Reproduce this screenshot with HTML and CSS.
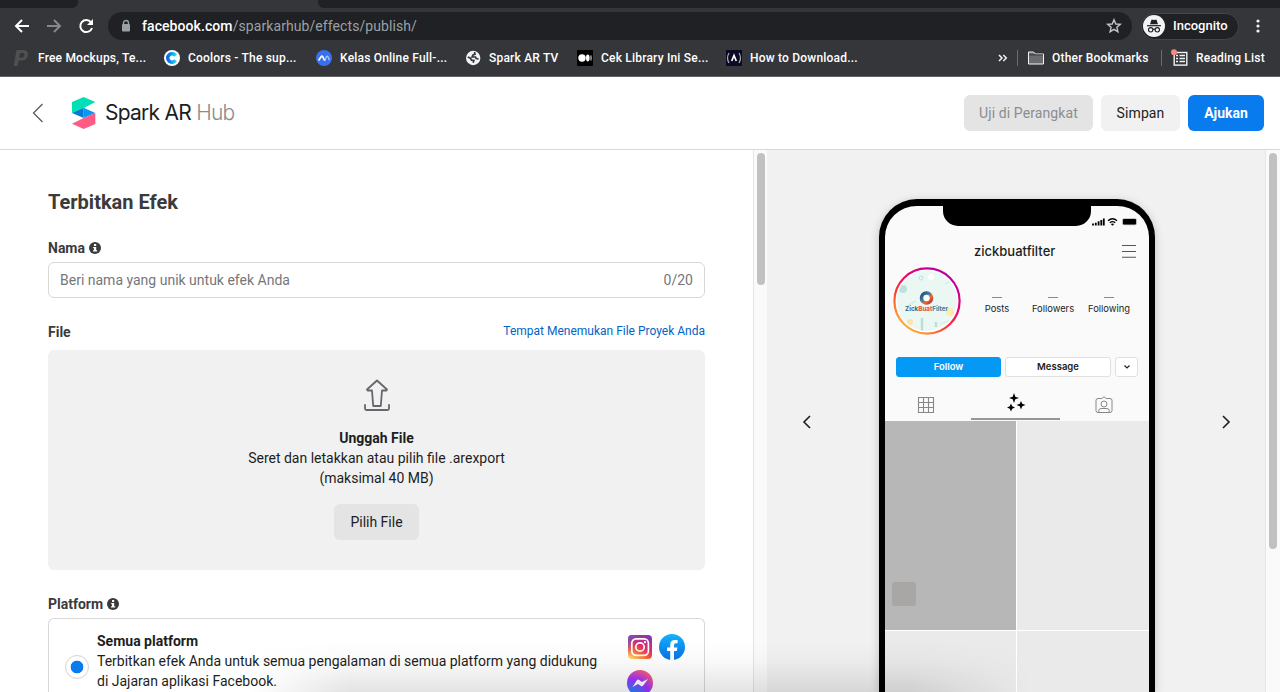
FILE: index.html
```html
<!DOCTYPE html>
<html lang="id">
<head>
<meta charset="utf-8">
<title>Spark AR Hub</title>
<link rel="stylesheet" href="styles.css">
</head>
<body>
<div class="browser">
  <div class="tabs"><div class="tab-left"></div><div class="tab-gap"></div><div class="tab-right"></div></div>
  <div class="toolbar">
    <svg class="nav-icons" width="108" height="28" fill="none" stroke-width="2">
      <path d="M29 14H16M22 8L16 14L22 20" stroke="#fff"/>
      <path d="M47 14H60M54 8L60 14L54 20" stroke="#87888b"/>
      <path d="M91 10.3A6 6 0 1 0 92 16" stroke="#fff"/><path d="M93 7V13H87Z" fill="#fff"/>
    </svg>
    <div class="address">
      <svg width="10" height="14"><path d="M2.5 6V4a2.5 2.5 0 0 1 5 0V6" fill="none" stroke="#9aa0a6" stroke-width="1.4"/><rect x="1" y="5" width="8" height="7.5" rx="1" fill="#9aa0a6"/></svg>
      <div class="url"><span class="host">facebook.com</span>/sparkarhub/effects/publish/</div>
      <svg class="star" width="16" height="16"><path d="M8 1.8L9.8 6L14.3 6.4L10.9 9.3L11.9 13.7L8 11.4L4.1 13.7L5.1 9.3L1.7 6.4L6.2 6Z" fill="none" stroke="#c4c5c7" stroke-width="1.4"/></svg>
    </div>
    <div class="incognito">
      <svg width="22" height="22"><circle cx="11" cy="11" r="11" fill="#f1f3f4"/><path d="M7 9.2L8.4 5Q8.7 4.3 9.5 4.7L11 5L12.5 4.7Q13.3 4.3 13.6 5L15 9.2Z" fill="#202124"/><path d="M4 10.7H18" stroke="#202124" stroke-width="1.2"/><g fill="none" stroke="#202124" stroke-width="1.1"><circle cx="7.7" cy="14.8" r="2.2"/><circle cx="14.3" cy="14.8" r="2.2"/><path d="M10 14.5Q11 13.8 12 14.5"/></g></svg>
      <span>Incognito</span>
    </div>
    <svg class="kebab" width="6" height="16" fill="#f1f3f4"><circle cx="3" cy="3" r="1.6"/><circle cx="3" cy="8" r="1.6"/><circle cx="3" cy="13" r="1.6"/></svg>
  </div>
  <div class="bookmarks">
    <div class="bookmark"><svg width="16" height="16"><path d="M3.5 0H10.5Q15.5 .3 15 5Q14 10.5 8.8 10.5H5.8L4.4 16H.7ZM7 3L6.2 7.8H8.5Q11 7.8 11.4 5Q11.6 3 9.5 3Z" fill="#505050" fill-rule="evenodd"/></svg><span>Free Mockups, Te...</span></div>
    <div class="bookmark"><svg width="16" height="16"><defs><linearGradient id="cool"><stop stop-color="#0869e8"/><stop offset="1" stop-color="#14d5ee"/></linearGradient></defs><circle cx="8" cy="8" r="8" fill="#fff"/><path d="M11.5 5.7A4.2 4.2 0 1 0 11.5 10.3" fill="none" stroke="url(#cool)" stroke-width="3.5"/></svg><span>Coolors - The sup...</span></div>
    <div class="bookmark"><svg width="16" height="16"><circle cx="8" cy="8" r="8" fill="#3971ed"/><path d="M2.6 10.5L5.2 6.5Q6 5.5 6.7 6.6L8.1 9.5Q8.7 10.5 9.4 9.3" fill="none" stroke="#fff" stroke-width="1.6"/><path d="M9 9.7L10.6 6.5Q11.4 5.5 12.1 7L13.5 10.3" fill="none" stroke="#a5c0fa" stroke-width="1.4"/></svg><span>Kelas Online Full-...</span></div>
    <div class="bookmark globe"><svg width="16" height="16"><circle cx="7.2" cy="8" r="7.2" fill="#f1f3f4"/><path d="M8.5 2L9 4.2L7 5L6.2 6.8L9.5 7L10.2 8.6L12.6 9M1.8 7L4.4 8.2L5.5 10.2L7.8 10.4L7.2 12.7" fill="none" stroke="#35363a" stroke-width="1.7"/></svg><span>Spark AR TV</span></div>
    <div class="bookmark"><svg width="16" height="16"><rect width="16" height="16" rx="1" fill="#000"/><circle cx="5" cy="8" r="3.7" fill="#fff"/><ellipse cx="10.8" cy="8" rx="1.8" ry="3.4" fill="#fff"/><ellipse cx="14" cy="8" rx=".8" ry="3" fill="#aaa"/></svg><span>Cek Library Ini Se...</span></div>
    <div class="bookmark"><svg width="16" height="16"><path d="M0 0H16V16H0Z" fill="#0a0a23"/><path d="M3 3Q0 8 3 13M13 3Q16 8 13 13" fill="none" stroke="#aab" stroke-width="1.2"/><path d="M5.7 11L8 5.5L10.3 11" fill="none" stroke="#fff" stroke-width="1.7"/></svg><span>How to Download...</span></div>
    <div class="bookmark more"><svg width="10" height="8"><path d="M1 1L4 4L1 7M5.3 1L8.3 4L5.3 7" fill="none" stroke="#f1f3f4" stroke-width="1.5"/></svg></div>
    <div class="bookmark other"><svg width="16" height="14"><path d="M.5 1H5.5L7.5 3H15.5V13H.5Z" fill="#6a6b6e" stroke="#f1f3f4"/><path d="M1 3.9H15" stroke="#35363a"/></svg><span>Other Bookmarks</span></div>
    <div class="bookmark reading"><svg width="18" height="18"><rect x="3.2" y="3.5" width="12.6" height="12.6" fill="none" stroke="#f1f3f4" stroke-width="1.4"/><path d="M5 6.5H7M5 9.5H7M5 12.5H7M8.5 6.5H14M8.5 9.5H14M8.5 12.5H14" stroke="#f1f3f4" stroke-width="1.4"/><circle cx="3" cy="3.3" r="3" fill="#f28b82"/></svg><span>Reading List</span></div>
  </div>
</div>
<header class="header">
  <svg class="back" width="12" height="20"><path d="M10.5 1L1.5 10L10.5 19" fill="none" stroke="#555" stroke-width="1.2"/></svg>
  <svg class="logo" width="24" height="32"><path d="M0 5L11.7 0L23.3 5L11.7 11L0 16Z" fill="#00dfb5"/><path d="M0 16L11.7 10.7V21Z" fill="#087bd1"/><path d="M11.7 10.7L23.3 16L11.7 21Z" fill="#0699f5"/><path d="M23.3 16V27L11.7 32L0 26.7L11.7 21Z" fill="#ff5b84"/></svg>
  <div class="brand">Spark AR <span>Hub</span></div>
  <div class="actions"><button class="btn test">Uji di Perangkat</button><button class="btn save">Simpan</button><button class="btn submit">Ajukan</button></div>
</header>
<main class="main">
  <section class="form">
    <h1>Terbitkan Efek</h1>
    <div class="label name-label">Nama <svg class="info" width="12" height="12"><circle cx="6" cy="6" r="6" fill="#3b3b3c"/><path d="M5 2H7.2V4H5ZM4.2 5H7.2V8.3H8.2V9.6H4V8.3H5V6.3H4.2Z" fill="#fff"/></svg></div>
    <div class="input"><span>Beri nama yang unik untuk efek Anda</span><span>0/20</span></div>
    <div class="file-row"><div class="label">File</div><a>Tempat Menemukan File Proyek Anda</a></div>
    <div class="drop">
      <svg width="28" height="33" fill="none" stroke="#65676b" stroke-width="1.8" stroke-linejoin="round" stroke-linecap="round"><path d="M14 1.5L24 10.5L23.4 11.5H19L17.8 27H10.2L9 11.5H4.6L4 10.5Z"/><path d="M2 26V29.5Q2 31 3.5 31H24.5Q26 31 26 29.5V26"/></svg>
      <b>Unggah File</b><div>Seret dan letakkan atau pilih file .arexport</div><div>(maksimal 40 MB)</div>
      <button class="btn choose">Pilih File</button>
    </div>
    <div class="label platform-label">Platform <svg class="info" width="12" height="12"><circle cx="6" cy="6" r="6" fill="#3b3b3c"/><path d="M5 2H7.2V4H5ZM4.2 5H7.2V8.3H8.2V9.6H4V8.3H5V6.3H4.2Z" fill="#fff"/></svg></div>
    <div class="platform">
      <div class="radio"></div>
      <div class="platform-text"><b>Semua platform</b><br>Terbitkan efek Anda untuk semua pengalaman di semua platform yang didukung di Jajaran aplikasi Facebook.</div>
      <div class="apps">
        <svg width="26" height="26"><defs><linearGradient id="ig" x1=".2" y1="1" x2=".8" y2="0"><stop stop-color="#ffd36a"/><stop offset=".28" stop-color="#fa6b32"/><stop offset=".55" stop-color="#e52b67"/><stop offset="1" stop-color="#7b39b7"/></linearGradient><linearGradient id="igb" x1="0" y1="0" x2=".45" y2=".4"><stop stop-color="#4864d2"/><stop offset="1" stop-color="#b23099" stop-opacity="0"/></linearGradient></defs><rect x="1" y="1" width="24" height="24" rx="4" fill="url(#ig)"/><rect x="1" y="1" width="24" height="24" rx="4" fill="url(#igb)"/><g fill="none" stroke="#fff" stroke-width="1.7"><rect x="4.8" y="4.8" width="16.6" height="16.6" rx="4.3"/><circle cx="13" cy="13" r="4.2"/></g><circle cx="18" cy="8.2" r="1.1" fill="#fff"/></svg>
        <svg width="26" height="26"><defs><linearGradient id="fb" x2="0" y2="1"><stop stop-color="#12b2fa"/><stop offset="1" stop-color="#0871e8"/></linearGradient></defs><circle cx="13" cy="13" r="13" fill="url(#fb)"/><path d="M11.2 26V17H8V13.6H11.2V11Q11.2 6 16 6H18.6V9.3H16.7Q15 9.3 15 11.2V13.6H18.4L17.8 17H15V26Z" fill="#fff"/></svg>
        <svg width="26" height="26"><defs><radialGradient id="ms" cx=".2" cy="1" r="1.1"><stop stop-color="#0799ff"/><stop offset=".6" stop-color="#a033ff"/><stop offset="1" stop-color="#ff5b75"/></radialGradient></defs><circle cx="13" cy="13" r="13" fill="url(#ms)"/><path d="M5.5 17L10 10Q11 9 12.3 10L14.8 12L21 9L16.2 15.5Q15 17 13.6 15.8L11.1 14Z" fill="#fff"/></svg>
      </div>
    </div>
  </section>
  <div class="scroll scroll-left"><div></div></div>
  <section class="preview">
    <svg class="prev" width="10" height="16"><path d="M8 2L2 8L8 14" fill="none" stroke="#1c1e21" stroke-width="1.6"/></svg>
    <div class="phone">
      <div class="status"><div class="notch"></div>
        <svg width="48" height="10"><path d="M2 8.5V6.5M4.8 8.5V5.7M7.6 8.5V4.3M10.3 8.5V3M12.8 8.5V1.5" stroke="#000" stroke-width="1.8"/><path d="M17 3.7Q21.5-.2 26 3.7M18.8 5.7Q21.5 3.5 24.2 5.7" fill="none" stroke="#000" stroke-width="1.3"/><path d="M19.8 7Q21.5 5.8 23.2 7L21.5 8.8Z"/><rect x="31" y="1.2" width="15" height="7" rx="1.7" fill="#bbb"/><rect x="32" y="2" width="13" height="5.4" rx="1"/></svg>
      </div>
      <div class="profile-name"><span>zickbuatfilter</span><svg width="16" height="14"><path d="M1 1.5H15M1 7.5H15M1 13.2H15" stroke="#555" stroke-width="1.1"/></svg></div>
      <div class="profile">
        <svg width="68" height="68" viewBox="0 0 68 68"><defs><linearGradient id="ring" x1=".15" y1=".9" x2=".75" y2=".05"><stop stop-color="#ffb338"/><stop offset=".35" stop-color="#fb3b30"/><stop offset=".65" stop-color="#ed0070"/><stop offset="1" stop-color="#b900a5"/></linearGradient><linearGradient id="ball" x2="1" y2="1"><stop stop-color="#294776"/><stop offset=".35" stop-color="#337ca1"/><stop offset=".65" stop-color="#ee6b32"/><stop offset="1" stop-color="#a83640"/></linearGradient><clipPath id="av"><circle cx="34" cy="34" r="30"/></clipPath></defs><circle cx="34" cy="34" r="32.6" fill="#fff" stroke="url(#ring)" stroke-width="2.2"/><g clip-path="url(#av)"><path d="M0 0H68V68H0Z" fill="#ebf7f3"/><circle cx="10" cy="22" r="4" fill="#bce2d9"/><circle cx="59" cy="8" r="4" fill="#f5e8b5"/><circle cx="57" cy="45" r="4" fill="#fbedb0"/><circle cx="28" cy="11" r="2" fill="none" stroke="#bde4dd"/><path d="M29 51V66M43 55V60" stroke="#badfd7" stroke-width="2.4"/><path d="M15 38L23 34M47 57L56 54M52 17L58 14" stroke="#dcefe9" stroke-width="2"/><circle cx="38" cy="10" r="3" fill="#fff"/><circle cx="17" cy="55" r="3" fill="#f9e5ae"/></g><circle cx="33.5" cy="31" r="5" fill="#fff" stroke="url(#ball)" stroke-width="3.6"/><text x="12" y="43.8" textLength="43" lengthAdjust="spacingAndGlyphs" class="avatar-text"><tspan fill="#336a88">Zick</tspan><tspan fill="#ed4b35">Buat</tspan><tspan fill="#397b9b">Filter</tspan></text></svg>
        <div class="stat s1"><i></i>Posts</div><div class="stat s2"><i></i>Followers</div><div class="stat s3"><i></i>Following</div>
      </div>
      <div class="phone-actions"><div class="follow">Follow</div><div>Message</div><div><svg width="8" height="6"><path d="M1.5 1.5L4 4L6.5 1.5" fill="none" stroke="#222" stroke-width="1.2"/></svg></div></div>
      <div class="phone-tabs">
        <div><svg width="18" height="18" fill="none" stroke="#888" stroke-width="1.1"><path d="M1.5 1.5H16.5V16.5H1.5ZM6.5 1.5V16.5M11.5 1.5V16.5M1.5 6.5H16.5M1.5 11.5H16.5"/></svg></div>
        <div class="active"><svg width="20" height="20"><path d="M8 0L9.3 3.7L13 5L9.3 6.3L8 10L6.7 6.3L3 5L6.7 3.7ZM15 8L16.2 10.8L19.5 12L16.2 13.2L15 16.5L13.8 13.2L10.5 12L13.8 10.8ZM5 10.5L6.2 13.3L9 14.5L6.2 15.7L5 18.5L3.8 15.7L1 14.5L3.8 13.3Z"/></svg></div>
        <div><svg width="18" height="18" fill="none" stroke="#888"><path d="M3 2.5H6.8L9 .8L11.2 2.5H15Q17 2.5 17 4.5V14.5Q17 16.5 15 16.5H3Q1 16.5 1 14.5V4.5Q1 2.5 3 2.5ZM3.8 16.5V14.5Q4 12.5 6 12.5H12Q14 12.5 14.2 14.5V16.5"/><circle cx="9" cy="8" r="3"/></svg></div>
      </div>
      <div class="gallery"><div class="dark"><i></i></div><div></div><div></div><div></div></div>
    </div>
    <svg class="next" width="10" height="16"><path d="M2 2L8 8L2 14" fill="none" stroke="#1c1e21" stroke-width="1.6"/></svg>
  </section>
  <div class="scroll scroll-right"><div></div></div>
</main>
<div class="bottom-shade"></div>
</body>
</html>
```
FILE: styles.css
```css
* { box-sizing: border-box; }
html { height: 692px; overflow: hidden; }
body { margin: 0; width: 1280px; height: 692px; overflow: hidden; display: flex; flex-direction: column; font: 14px/20px Roboto, sans-serif; color: #1c1e21; background: #fff; position: relative; }
svg { flex: none; display: block; }
button { font: inherit; border: 0; }
.browser { height: 77px; flex: none; background: #35363a; border-bottom: 1px solid #626267; color: #fff; }
.tabs { display: flex; height: 8px; }
.tab-left { width: 78px; background: #202124; border-radius: 0 0 6px 0; }
.tab-gap { width: 240px; }
.tab-right { flex: 1; background: #202124; border-radius: 0 0 0 6px; }
.toolbar { display: flex; height: 36px; align-items: center; }
.address { width: 1024px; height: 28px; border-radius: 14px; background: #202124; display: flex; align-items: center; padding: 0 10px 0 13px; }
.url { margin-left: 11px; font-size: 14px; letter-spacing: .08px; color: #9aa0a6; }
.host { color: #fff; font-weight: 500; }
.star { margin-left: auto; }
.incognito { margin-left: 9px; width: 98px; height: 27px; border: 1px solid #45444a; border-radius: 14px; background: #202124; display: flex; align-items: center; gap: 8px; padding-left: 1px; font-size: 13px; font-weight: 500; }
.kebab { margin-left: 16px; }
.bookmarks { display: grid; grid-template-columns: 151px 152px 150px 111px 149px 272px 30px 144px 108px; height: 28px; padding-left: 13px; align-items: center; font-size: 12px; font-weight: 500; letter-spacing: .2px; white-space: nowrap; }
.bookmark { display: flex; align-items: center; gap: 8px; }
.bookmark:first-child { gap: 9px; }
.bookmark.globe { gap: 7px; }
.other, .reading { height: 16px; border-left: 1px solid #6b6c70; margin-left: -11px; padding-left: 10px; }
.bookmark.reading { gap: 7px; padding-left: 9px; }
.header { height: 73px; flex: none; border-bottom: 1px solid #d8d8d8; display: flex; align-items: center; padding: 0 16px 0 32px; }
.logo { margin-left: 28px; }
.brand { margin-left: 9px; font-size: 21px; font-weight: 400; font-family: Inter, sans-serif; letter-spacing: -.75px; }
.brand span { color: #8b8b8d; font-weight: 300; }
.actions { margin-left: auto; display: flex; gap: 8px; }
.btn { height: 36px; padding: 0; border-radius: 6px; font-weight: 400; font-size: 14px; display: grid; place-items: center; color: #1c1e21; }
.actions .test { width: 129px; background: #e4e4e4; color: #8a8d91; letter-spacing: .1px; }
.actions .save { width: 79px; background: #f1f1f1; letter-spacing: .1px; }
.actions .submit { width: 76px; background: #087bee; color: #fff; font-weight: 700; }
.main { display: flex; height: 542px; overflow: hidden; }
.form { width: 753px; padding: 39px 48px 0; }
h1 { margin: 0; font-size: 20px; line-height: 26px; color: #3b3b3c; }
.label { font-weight: 700; color: #3b3b3c; display: flex; align-items: center; gap: 4px; }
.name-label { margin-top: 23px; }
.input { height: 36px; margin-top: 4px; border: 1px solid #d8d8d8; border-radius: 6px; display: flex; align-items: center; justify-content: space-between; padding: 0 11px; color: #75777a; }
.file-row { margin-top: 24px; display: flex; justify-content: space-between; }
.file-row a { color: #0064c8; font-size: 12px; line-height: 18px; }
.drop { height: 220px; margin-top: 8px; background: #f1f1f1; border-radius: 6px; padding-top: 29px; display: flex; flex-direction: column; align-items: center; }
.drop b { margin-top: 16px; }
.choose { width: 85px; margin-top: 16px; background: #e4e4e4; }
.platform-label { margin-top: 24px; }
.platform { height: 74px; margin-top: 4px; border: 1px solid #d8d8d8; border-bottom: 0; border-radius: 6px 6px 0 0; padding: 12px 19px 0 16px; display: flex; align-items: flex-start; overflow: hidden; }
.radio { flex: none; width: 24px; height: 24px; margin-top: 24px; border: 1px solid #d3d3d3; border-radius: 50%; background: radial-gradient(circle, #087bee 6px, #fff 6.7px); }
.platform-text { width: 506px; margin-left: 8px; }
.apps { width: 58px; margin-left: auto; margin-top: 3px; display: flex; flex-wrap: wrap; gap: 10px 6px; }
.scroll { display: flex; justify-content: center; background: #fafafa; border-left: 1px solid #e5e5e5; padding-top: 3px; }
.scroll div { width: 8px; border-radius: 4px; background: #c1c1c1; }
.scroll-left { width: 14px; }
.scroll-left div { height: 132px; }
.scroll-right { width: 15px; }
.scroll-right div { height: 396px; }
.preview { width: 498px; background: #f1f1f1; display: flex; align-items: flex-start; }
.prev { margin: 264px 0 0 35px; }
.phone { width: 276px; height: 493px; margin: 49px 0 0 67px; border: solid #000; border-width: 7px 6px 0; border-radius: 38px 38px 0 0; overflow: hidden; background: #fafafa; flex: none; box-shadow: 0 2px 10px #0003; font-family: Inter, sans-serif; }
.next { margin: 264px 0 0 66px; }
.status { height: 20px; display: flex; padding-left: 58px; }
.notch { width: 148px; background: #000; border-radius: 0 0 15px 15px; }
.status svg { margin-top: 11px; overflow: visible; }
.profile-name { height: 38px; padding: 12px 12px 0 89px; display: flex; align-items: center; justify-content: space-between; font-weight: 500; font-size: 13px; }
.profile { display: flex; padding: 3px 0 0 8px; }
.profile svg { margin-left: -.5px; }
.stat { font-size: 9.4px; line-height: 12px; text-align: center; margin-top: 30px; display: flex; flex-direction: column; align-items: center; }
.stat i { width: 10px; height: 1px; margin-bottom: 5px; background: #888; }
.s1 { width: 26px; margin-left: 23.5px; }
.s2 { width: 44px; margin-left: 21px; }
.s3 { width: 44px; margin-left: 12px; }
.avatar-text { font: 700 6px Inter, sans-serif; }
.phone-actions { display: flex; margin: 22px 0 0 11px; gap: 4px; }
.phone-actions div { width: 106px; height: 20px; border: 1px solid #e0e0e0; border-radius: 3px; background: #fff; display: grid; place-items: center; font-size: 9.5px; font-weight: 600; line-height: 18px; }
.phone-actions .follow { width: 105px; background: #0499f5; border-color: #0499f5; color: #fff; }
.phone-actions div:last-child { width: 23px; }
.phone-tabs { display: grid; grid-template-columns: 86px 89px 89px; height: 35px; margin-top: 9px; }
.phone-tabs div { display: grid; place-items: center; padding: 3px 4px 0 0; height: 34px; }
.phone-tabs .active { border-bottom: 2px solid #979797; padding: 2px 0 0; }
.phone-tabs div:last-child { padding-right: 2px; }
.gallery { display: grid; grid-template-columns: 131px 132px; grid-template-rows: 209px 61px; gap: 1px; background: #fff; }
.gallery div { background: #eaeaea; }
.gallery .dark { background: #b7b7b7; padding: 161px 0 0 7px; }
.dark i { display: block; width: 24px; height: 24px; border-radius: 3px; background: #a8a7a5; }
.bottom-shade { position: absolute; left: 250px; right: 250px; bottom: 0; height: 50px; background: linear-gradient(#0000, #00000006 40%, #0000001c); mask-image: linear-gradient(90deg, #0000, #000 100px, #000 calc(100% - 120px), #0000); pointer-events: none; }
```
